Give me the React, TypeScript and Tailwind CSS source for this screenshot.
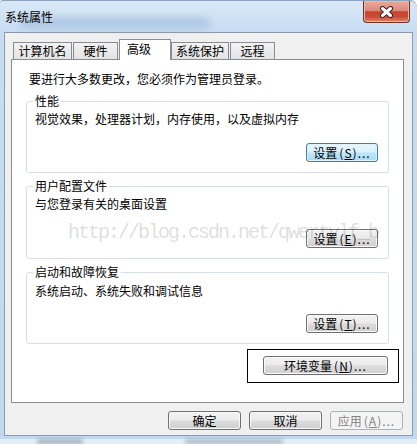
import React from 'react';

type BtnKind = 'normal' | 'default' | 'disabled';

const Btn = ({ label, acc, kind = 'normal', width }: { label: string; acc: string; kind?: BtnKind; width: string }) => {
  const look =
    kind === 'default'
      ? 'border-[#3c7fb1] bg-[linear-gradient(180deg,#eaf6fd_0%,#d9f0fc_48%,#bee6fd_52%,#a7d9f5_100%)] shadow-[inset_0_0_0_1px_#dff3fd] text-black'
      : kind === 'disabled'
      ? 'border-[#adb2b5] bg-[#f4f4f4] text-[#838383]'
      : 'border-[#707070] bg-[linear-gradient(180deg,#f2f2f2_0%,#ebebeb_48%,#dddddd_52%,#cfcfcf_100%)] shadow-[inset_0_0_0_1px_#fafafa] text-black';
  return (
    <button className={`flex h-[19px] items-center justify-center rounded-[3px] border text-[12px] leading-[14px] ${width} ${look}`}>
      {label}
      <span className="ml-[2px] tracking-[1px]">
        (<span className="underline">{acc}</span>)...
      </span>
    </button>
  );
};

const Tab = ({ label, width, active, gap }: { label: string; width: string; active?: boolean; gap?: boolean }) =>
  active ? (
    <div className={`relative z-10 -mb-px h-[21px] border border-b-0 border-[#898c95] bg-white pl-[7px] pt-[2px] ${width} ${gap ? 'ml-px' : ''}`}>
      {label}
    </div>
  ) : (
    <div
      className={`flex h-[17px] items-center justify-center border border-b-0 border-[#898c95] bg-[linear-gradient(180deg,#f3f3f3,#e3e3e3)] ${width} ${gap ? 'ml-px' : ''}`}
    >
      {label}
    </div>
  );

export default function App() {
  return (
    <div className="relative h-[444px] w-[417px] overflow-hidden bg-white font-['Noto_Sans_CJK_SC',sans-serif] text-[12px] leading-[14px] text-black">
      <div className="flex h-full flex-col rounded-tl-[3px] rounded-tr-[7px] border-t border-[#8ba3c0] bg-[linear-gradient(180deg,#d9e8f7_0px,#c8ddf2_30px,#c1d8ef_100%)]">
        {/* Title bar */}
        <div className="relative flex h-[31px] items-center pl-[5px]">
          <span className="absolute left-[20px] top-[17px] h-[10px] w-[190px] rounded-full bg-[#5d83b8] opacity-30 blur-[4px]"></span>
          <span className="relative">系统属性</span>
          <button className="absolute right-[7px] top-0 flex h-[22px] w-[47px] items-center justify-center rounded-b-[4px] border border-t-0 border-[#6e3129] bg-[linear-gradient(180deg,#e8ab9e_0%,#da8b7b_45%,#c5442f_52%,#c84b36_75%,#e2866f_100%)] shadow-[inset_0_0_0_1px_#eab7ad]">
            <svg width="15" height="12" viewBox="0 0 15 12">
              <path d="M3.5 2.5 L11.5 9.5 M11.5 2.5 L3.5 9.5" stroke="#3b2422" strokeWidth="5" strokeLinecap="round" />
              <path d="M3.5 2.5 L11.5 9.5 M11.5 2.5 L3.5 9.5" stroke="#ffffff" strokeWidth="3" strokeLinecap="round" />
            </svg>
          </button>
        </div>

        {/* Client area */}
        <div className="ml-[4px] w-[409px] border border-[#8d9aab] bg-[#f0f0f0] pb-[5px] pt-[6px]">
          {/* Tabs */}
          <div className="ml-[6px] flex h-[20px] items-end pl-[2px]">
            <Tab label="计算机名" width="w-[59px]" />
            <Tab label="硬件" width="w-[45px]" gap />
            <Tab label="高级" width="w-[52px]" active gap />
            <Tab label="系统保护" width="w-[58px]" />
            <Tab label="远程" width="w-[45px]" gap />
          </div>

          {/* Panel */}
          <div className="ml-[6px] h-[344px] w-[393px] border border-[#898c95] bg-white pt-[12px]">
            <p className="pl-[17px]">要进行大多数更改，您必须作为管理员登录。</p>

            <fieldset className="ml-[14px] mt-[8px] w-[363px] rounded-[3px] border border-[#d5dfe5] pb-[10px] pl-[6px]">
              <legend className="px-[2px]">性能</legend>
              <div className="mt-[4px] pl-[2px]">视觉效果，处理器计划，内存使用，以及虚拟内存</div>
              <div className="mt-[17px] flex justify-end pr-[10px]">
                <Btn label="设置" acc="S" kind="default" width="w-[72px]" />
              </div>
            </fieldset>

            <fieldset className="ml-[14px] mt-[6px] w-[363px] rounded-[3px] border border-[#d5dfe5] pb-[10px] pl-[6px]">
              <legend className="px-[2px]">用户配置文件</legend>
              <div className="mt-[4px] pl-[2px]">与您登录有关的桌面设置</div>
              <div className="mt-[18px] flex justify-end pr-[10px]">
                <Btn label="设置" acc="E" width="w-[72px]" />
              </div>
            </fieldset>

            <fieldset className="ml-[14px] mt-[6px] w-[363px] rounded-[3px] border border-[#d5dfe5] pb-[10px] pl-[6px]">
              <legend className="px-[2px]">启动和故障恢复</legend>
              <div className="mt-[5px] pl-[2px]">系统启动、系统失败和调试信息</div>
              <div className="mt-[16px] flex justify-end pr-[10px]">
                <Btn label="设置" acc="T" width="w-[72px]" />
              </div>
            </fieldset>

            <div className="ml-[235px] mt-[5px] h-[34px] w-[152px] border border-black pl-[15px] pt-[6px]">
              <Btn label="环境变量" acc="N" width="w-[125px]" />
            </div>
          </div>

          {/* Dialog buttons */}
          <div className="mt-[8px] flex justify-end gap-[8px] pr-[9px]">
            <button className="flex h-[19px] w-[73px] items-center justify-center rounded-[3px] border border-[#707070] bg-[linear-gradient(180deg,#f2f2f2_0%,#ebebeb_48%,#dddddd_52%,#cfcfcf_100%)] shadow-[inset_0_0_0_1px_#fafafa]">
              确定
            </button>
            <button className="flex h-[19px] w-[73px] items-center justify-center rounded-[3px] border border-[#707070] bg-[linear-gradient(180deg,#f2f2f2_0%,#ebebeb_48%,#dddddd_52%,#cfcfcf_100%)] shadow-[inset_0_0_0_1px_#fafafa]">
              取消
            </button>
            <Btn label="应用" acc="A" kind="disabled" width="w-[73px]" />
          </div>
        </div>

        {/* Lower frame, blurred desktop behind */}
        <div className="flex flex-1 flex-col">
          <div className="h-[3px]"></div>
          <div className="flex flex-1 items-end bg-[#e4eef8] pb-[1px] pl-[37px]">
            <span className="h-[3px] w-[46px] rounded-full bg-[#3b4c63] opacity-60 blur-[2px]"></span>
            <span className="ml-[102px] h-[3px] w-[98px] rounded-full bg-[#3b4c63] opacity-50 blur-[2px]"></span>
          </div>
        </div>
      </div>

      {/* Watermark */}
      <div className="pointer-events-none absolute left-[68px] top-[222px] whitespace-nowrap font-['Liberation_Mono',monospace] text-[20px] leading-[22px] tracking-[-2px] text-black/15">
        http://blog.csdn.net/qwertylf_b
      </div>
    </div>
  );
}
